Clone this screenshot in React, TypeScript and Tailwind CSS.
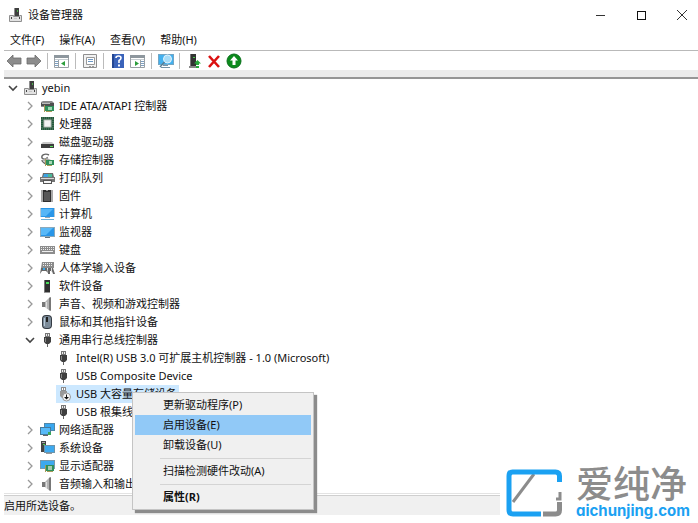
import type { ReactNode } from 'react';

// ---------------------------------------------------------------------------
// Device icons (16x16)
// ---------------------------------------------------------------------------

function Svg({ children }: { children: ReactNode }) {
  return (
    <svg viewBox="0 0 16 16" className="h-4 w-4 shrink-0" aria-hidden="true">
      {children}
    </svg>
  );
}

const ICONS: Record<string, ReactNode> = {
  computer: (
    <Svg>
      <path d="M6 1h5v9H6z" fill="#3f3f3f" />
      <path d="M6 1h1v8H6z" fill="#8e8e8e" />
      <path d="M9 3h1v2H9z" fill="#4bb04b" />
      <path d="M1.500 8.500h4v1h6v-1h2v6h-12z" fill="#e2e2e2" stroke="#8f8f8f" />
      <path d="M3 10h1v2H3zM11 10h1v2h-1z" fill="#444" />
      <path d="M6 11h3v1H6z" fill="#c4c4c4" />
    </Svg>
  ),
  ide: (
    <Svg>
      <path d="M1 4l2-1h9l2 2v4H1z" fill="#8a8a8a" />
      <path d="M1 5h13v3H1z" fill="#4f4f4f" />
      <path d="M2 5h8v1H2z" fill="#bbb" />
      <path d="M5 8h9v5H5z" fill="#2f8f5b" />
      <path d="M8 9h4v3H8z" fill="#9fd8b4" />
      <path d="M4 7h1v7H4zM6 13h6v1H6z" fill="#a89a58" />
    </Svg>
  ),
  cpu: (
    <Svg>
      <path d="M1 1h13v13H1z" fill="#24583c" />
      <path d="M2 2h11v11H2z" fill="none" stroke="#7f9f86" strokeDasharray="1 1" strokeWidth=".7" />
      <path d="M3.500 3.500h8v8h-8z" fill="#b9c0b9" />
      <path d="M4.500 4.500h6v6h-6z" fill="#f2f2f2" />
    </Svg>
  ),
  disk: (
    <Svg>
      <path d="M3 8h9l2 2H1z" fill="#c9c9c9" />
      <path d="M1 10h13v4H1z" fill="#3d3d3d" />
      <path d="M10 12h3v1h-3z" fill="#5be35b" />
    </Svg>
  ),
  storage: (
    <Svg>
      <path d="M9 3C5 1 1 3 2 6c2 2 6 1 5-1M2 8c0 2 2 3 4 4" fill="none" stroke="#666" strokeWidth="1.4" />
      <path d="M2 8l5-2 4 2-4 3z" fill="#aaa" />
      <path d="M6 8h8v5H6z" fill="#2f8f5b" />
      <path d="M9 9h3v3H9z" fill="#a8d6b6" />
      <path d="M5 7h1v7H5zM7 13h5v1H7z" fill="#a89a58" />
    </Svg>
  ),
  printer: (
    <Svg>
      <path d="M3 3h10l1 4H2z" fill="#6b6b6b" />
      <path d="M4 4h5v3H3z" fill="#3da1e0" />
      <path d="M8 4h4v3H8z" fill="#49b897" />
      <path d="M0 7h15v5H0z" fill="#747474" />
      <path d="M1 8h13v1H1z" fill="#d8d8d8" />
      <path d="M3 10h9v4H3z" fill="#555" />
      <path d="M4 11h7v2H4z" fill="#f4f4f4" />
    </Svg>
  ),
  firmware: (
    <Svg>
      <path d="M1 3h2M1 5h2M1 7h2M1 9h2M1 11h2M1 13h2M11 3h2M11 5h2M11 7h2M11 9h2M11 11h2M11 13h2" stroke="#555" />
      <path d="M3 2h3l1 1 1-1h3v12H3z" fill="#303030" />
      <path d="M4 4h6v9H4z" fill="#585858" />
    </Svg>
  ),
  pc: (
    <Svg>
      <path d="M0 2h15v9H0z" fill="#b6c8d4" />
      <path d="M1 2h13v9H1z" fill="#2996e8" />
      <path d="M1 3h12L6 10H1z" fill="#55b6f7" />
      <path d="M5 11h5v1H5z" fill="#9aa7af" />
      <path d="M1 13h13v1H1z" fill="#6caed6" />
    </Svg>
  ),
  monitor: (
    <Svg>
      <path d="M0 3h15v10H0z" fill="#8ba9bb" />
      <path d="M1 4h13v8H1z" fill="#2996e8" />
      <path d="M1 4h12l-7 7H1z" fill="#59b9f8" />
      <path d="M5 13h5v1H5z" fill="#68747c" />
    </Svg>
  ),
  keyboard: (
    <Svg>
      <path d="M0 4h15v8H0z" fill="#8d8d8d" />
      <path d="M1 5.500h13M1 7.500h13" stroke="#eee" strokeDasharray="1 1" />
      <path d="M2 9.500h11" stroke="#eee" />
    </Svg>
  ),
  hid: (
    <Svg>
      <path d="M2 2h12v6H1z" fill="#8b8b8b" />
      <path d="M3 3.500h10M3 5.500h10" stroke="#eee" strokeDasharray="1 1" />
      <path d="M0 14l1-6h6l1 5-2-2H2zM8 8h5l2 6h-2l-1-3h-2v3H8z" fill="#666" />
      <path d="M3 8h2v2H3z" fill="#37a6e8" />
      <path d="M11 8h1v4h-1z" fill="#ddd" />
    </Svg>
  ),
  software: (
    <Svg>
      <path d="M4 2h6v12H4z" fill="#303030" />
      <path d="M4 2h1v12H4z" fill="#777" />
      <path d="M6 4h3v2H6z" fill="#48dc58" />
      <path d="M4 14h6v1H4z" fill="#999" />
    </Svg>
  ),
  sound: (
    <Svg>
      <path d="M2 6h3v5H2z" fill="#777" />
      <path d="M5 6l5-5v14l-5-4z" fill="#b4b4b4" />
      <path d="M6 6h1v6H6z" fill="#e0e0e0" />
      <path d="M9 2l2-1v14l-2-1z" fill="#777" />
    </Svg>
  ),
  mouse: (
    <Svg>
      <rect x="2" y="1" width="10" height="14" rx="4" fill="#343b43" />
      <rect x="3" y="2" width="8" height="12" rx="3" fill="#7c8b99" />
      <path d="M6 3h2v5H6z" fill="#202020" />
      <path d="M4 4h1v8H4z" fill="#b4c6d5" />
    </Svg>
  ),
  usb: (
    <Svg>
      <path d="M5 1h5v4H5z" fill="#777" />
      <path d="M6 2h1v2H6zM8 2h1v2H8z" fill="#eee" />
      <path d="M4 5h7v5l-2 2H6l-2-2z" fill="#3f3f3f" />
      <path d="M5 6h1v4H5z" fill="#888" />
      <path d="M7 12h1v3H7z" fill="#666" />
    </Svg>
  ),
  usbDisabled: (
    <Svg>
      <path d="M5 1h5v4H5z" fill="#8d8d8d" />
      <path d="M6 2h1v2H6zM8 2h1v2H8z" fill="#fff" />
      <path d="M4 5h7v5l-2 2H6l-2-2z" fill="#999" />
      <circle cx="10.500" cy="11" r="4" fill="#f5f5f5" stroke="#999" />
      <path d="M10.500 8.500v3" stroke="#111" />
      <path d="M8 11h5l-2.500 2.500z" fill="#111" />
    </Svg>
  ),
  network: (
    <Svg>
      <path d="M4 1h11v8H4z" fill="#4f88aa" />
      <path d="M5 2h9v6H5z" fill="#39a7ef" />
      <path d="M0 5h11v8H0z" fill="#477a9b" />
      <path d="M1 6h9v6H1z" fill="#58baf8" />
      <path d="M3 13h5v1H3z" fill="#666" />
      <path d="M8 10h3v3H8z" fill="#3aa65a" />
    </Svg>
  ),
  system: (
    <Svg>
      <path d="M1 1h5v11H1z" fill="#444" />
      <path d="M2 2h3v1H2z" fill="#aaa" />
      <path d="M3 4h2v1H3z" fill="#4bd04b" />
      <path d="M4 5h11v8H4z" fill="#6d94aa" />
      <path d="M5 6h9v6H5z" fill="#3da9ef" />
      <path d="M6 13h6v1H6z" fill="#999" />
    </Svg>
  ),
  display: (
    <Svg>
      <path d="M0 2h15v9H0z" fill="#7799ad" />
      <path d="M1 3h13v7H1z" fill="#3da9ef" />
      <path d="M6 7h8v6H6z" fill="#2f8f5b" />
      <path d="M8 8h4v4H8z" fill="#a5cab0" />
      <path d="M5 7h1v7H5zM7 13h6v1H7z" fill="#a89a58" />
    </Svg>
  ),
};

// ---------------------------------------------------------------------------
// Toolbar
// ---------------------------------------------------------------------------

function Arrow({ flip = false }: { flip?: boolean }) {
  return (
    <Svg>
      <path
        d={flip ? 'M15 8L9 2v3H1v6h8v3z' : 'M1 8l6-6v3h8v6H7v3z'}
        fill="#8c8c8c"
        stroke="#6b6b6b"
        strokeWidth=".8"
      />
    </Svg>
  );
}

function Panel({ right = false }: { right?: boolean }) {
  return (
    <Svg>
      <path d="M.5 2.500h14v12H.5z" fill="#fff" stroke="#9aa0a5" />
      <path d="M0 2h15v3H0z" fill="#8e979e" />
      <path d="M1 6h13v1H1z" fill="#c6cdd2" />
      <path d={right ? 'M10.500 7v7' : 'M4.500 7v7'} stroke="#9aa0a5" />
      <path d={right ? 'M11 8.500h3M11 10.500h3M11 12.500h3' : 'M1 8.500h3M1 10.500h3M1 12.500h3'} stroke="#7d9fc0" />
      <path d={right ? 'M5 8l4 2.500L5 13z' : 'M11 8l-4 2.500 4 2.500z'} fill="#2d9e3c" />
    </Svg>
  );
}

const TOOLS: { label: string; icon: ReactNode; divider?: boolean }[] = [
  { label: '后退', icon: <Arrow /> },
  { label: '前进', icon: <Arrow flip />, divider: true },
  { label: '显示/隐藏控制台树', icon: <Panel />, divider: true },
  {
    label: '属性',
    icon: (
      <Svg>
        <path d="M1.500 1.500h13v13h-13z" fill="#f2f2f2" stroke="#8f8f8f" />
        <path d="M4.500 4.500h8v7h-8z" fill="#fff" stroke="#999" />
        <path d="M6 6.500h5M6 8.500h5" stroke="#6d98c5" />
        <path d="M7 13h2v1H7zM10 13h2v1h-2z" fill="#999" />
      </Svg>
    ),
    divider: true,
  },
  {
    label: '帮助',
    icon: (
      <Svg>
        <path d="M2 1h12v14H2z" fill="#3a63ba" />
        <path d="M2 1h2v14H2z" fill="#244692" />
        <path d="M6 5q0-2 2.500-2T11 5q0 1.500-2 2.500V10" fill="none" stroke="#fff" strokeWidth="1.600" />
        <path d="M8 11.500h2v2H8z" fill="#fff" />
      </Svg>
    ),
  },
  { label: '显示/隐藏操作窗格', icon: <Panel right />, divider: true },
  {
    label: '扫描检测硬件改动',
    icon: (
      <Svg>
        <path d="M0 1h16v11H0z" fill="#74a6c4" />
        <path d="M1 2h14v9H1z" fill="#43b0ee" />
        <path d="M5 12h5v1H5zM3 14h9v1H3z" fill="#7593a7" />
        <circle cx="9.500" cy="6" r="4" fill="#a6dcf8" stroke="#e3f4fd" />
        <path d="M6.500 9L2 14" stroke="#5a7d93" strokeWidth="1.500" />
      </Svg>
    ),
    divider: true,
  },
  {
    label: '启用设备',
    icon: (
      <Svg>
        <path d="M4 1h6v12H4z" fill="#333" />
        <path d="M4 1h1v12H4z" fill="#777" />
        <path d="M7 4h2v1H7z" fill="#4bd04b" />
        <path d="M3 13h7v2H3z" fill="#888" />
        <path d="M11.500 7L15 10.500h-2V12h-3v-1.500H8z" fill="#27a83a" />
        <path d="M10 13h3v2h-3z" fill="#27a83a" />
      </Svg>
    ),
  },
  {
    label: '卸载设备',
    icon: (
      <Svg>
        <path d="M3 3l10 11M13 3L3 14" stroke="#db1111" strokeWidth="2.600" />
      </Svg>
    ),
  },
  {
    label: '更新驱动程序',
    icon: (
      <Svg>
        <circle cx="8" cy="8" r="7" fill="#0b8a1c" stroke="#08701a" />
        <path d="M8 3l4 4.500H9.500V12h-3V7.500H4z" fill="#fff" />
      </Svg>
    ),
  },
];

// ---------------------------------------------------------------------------
// Tree data
// ---------------------------------------------------------------------------

interface Device {
  icon: string;
  name: string;
  children?: Device[];
}

const DEVICES: Device[] = [
  { icon: 'ide', name: 'IDE ATA/ATAPI 控制器' },
  { icon: 'cpu', name: '处理器' },
  { icon: 'disk', name: '磁盘驱动器' },
  { icon: 'storage', name: '存储控制器' },
  { icon: 'printer', name: '打印队列' },
  { icon: 'firmware', name: '固件' },
  { icon: 'pc', name: '计算机' },
  { icon: 'monitor', name: '监视器' },
  { icon: 'keyboard', name: '键盘' },
  { icon: 'hid', name: '人体学输入设备' },
  { icon: 'software', name: '软件设备' },
  { icon: 'sound', name: '声音、视频和游戏控制器' },
  { icon: 'mouse', name: '鼠标和其他指针设备' },
  {
    icon: 'usb',
    name: '通用串行总线控制器',
    children: [
      { icon: 'usb', name: 'Intel(R) USB 3.0 可扩展主机控制器 - 1.0 (Microsoft)' },
      { icon: 'usb', name: 'USB Composite Device' },
      { icon: 'usbDisabled', name: 'USB 大容量存储设备' },
      { icon: 'usb', name: 'USB 根集线器' },
    ],
  },
  { icon: 'network', name: '网络适配器' },
  { icon: 'system', name: '系统设备' },
  { icon: 'display', name: '显示适配器' },
  { icon: 'sound', name: '音频输入和输出' },
];

const MENU = [['更新驱动程序(P)', '启用设备(E)', '卸载设备(U)'], ['扫描检测硬件改动(A)'], ['属性(R)']];

function Chevron({ open = false }: { open?: boolean }) {
  return (
    <button type="button" aria-label={open ? '折叠' : '展开'} className="h-4 w-4 shrink-0">
      <svg viewBox="0 0 16 16" className="h-4 w-4" aria-hidden="true">
        <path
          d={open ? 'M5 6l4 4 4-4' : 'M7 4l4 4-4 4'}
          fill="none"
          stroke={open ? '#444' : '#999'}
          strokeWidth={open ? 1.6 : 1.3}
        />
      </svg>
    </button>
  );
}

function ContextMenu() {
  return (
    <div
      role="menu"
      className="absolute top-[7px] left-[76px] z-10 w-[182px] border border-[#c4c4c4] bg-[#f0f0f0] p-0.5 shadow-[3px_3px_1px_#8c8c8c]"
    >
      {MENU.map((group, g) => (
        <div key={group[0]}>
          {g > 0 && <div className="mt-[3px] mb-0.5 ml-[25px] h-px bg-[#d4d4d4]" />}
          {group.map((item) => (
            <button
              key={item}
              type="button"
              role="menuitem"
              className={`block h-5 w-full pl-7 text-left ${
                item === '启用设备(E)' ? 'bg-[#91c9f7]' : ''
              } ${g === 2 ? 'font-bold' : ''}`}
            >
              {item}
            </button>
          ))}
        </div>
      ))}
    </div>
  );
}

function Watermark() {
  return (
    <div className="absolute right-0 bottom-0 flex h-14 items-start gap-3.5 bg-white pr-2 pl-1.5">
      <svg viewBox="0 0 56 48" className="mt-0.5 h-12 w-14" aria-hidden="true">
        <path d="M7 33L28 5" stroke="#8c8c8c" strokeWidth="3" />
        <path d="M53.500 13V7q0-4-4-4h-43Q3 3 3 7v34q0 4 4 4h28" fill="none" stroke="#1ba1f2" strokeWidth="5" />
        <path d="M54 23v7h-4" fill="none" stroke="#8c8c8c" strokeWidth="3" />
        <path d="M53.500 33v8q0 4-4 4H37" fill="none" stroke="#8c8c8c" strokeWidth="5" />
      </svg>
      <div className="flex flex-col">
        <span className="text-[37px] leading-[33px] font-medium text-[#8c8c8c]">爱纯净</span>
        <span className="font-[Inter,sans-serif] text-[15px] leading-[22px] font-bold text-[#1ba1f2] [font-feature-settings:'cv11']">
          aichunjing.com
        </span>
      </div>
    </div>
  );
}

export default function App() {
  return (
    <div className="relative flex min-h-screen flex-col bg-white pb-2 pl-1 font-['Noto_Sans','Noto_Sans_CJK_SC',sans-serif] text-[11px] leading-[18px] text-[#111]">
      <header className="flex h-[30px] items-center gap-1 pl-1">
        {ICONS.computer}
        <h1 className="flex-1">设备管理器</h1>
        <div className="flex gap-[9px]">
          <button type="button" aria-label="最小化" className="flex h-[30px] w-8 items-center justify-center">
            <span className="h-px w-[9px] bg-[#333]" />
          </button>
          <button type="button" aria-label="最大化" className="flex h-[30px] w-8 items-center justify-center">
            <span className="h-[9px] w-[9px] border border-[#111]" />
          </button>
          <button type="button" aria-label="关闭" className="flex h-[30px] w-8 items-center justify-center">
            <svg viewBox="0 0 10 10" className="h-2.5 w-2.5" aria-hidden="true">
              <path d="M0 0l10 10M10 0L0 10" stroke="#333" />
            </svg>
          </button>
        </div>
      </header>

      <nav className="flex h-5 items-center gap-[15px] pl-1.5">
        {['文件(F)', '操作(A)', '查看(V)', '帮助(H)'].map((item) => (
          <button key={item} type="button">
            {item}
          </button>
        ))}
      </nav>

      <div className="flex h-5 items-center border-t border-[#b9b9b9]">
        {TOOLS.map((tool) => (
          <div key={tool.label} className="flex items-center">
            <button type="button" aria-label={tool.label} className="flex h-5 w-5 items-center justify-center">
              {tool.icon}
            </button>
            {tool.divider && <span className="mr-1 ml-[3px] h-4 w-px bg-[#bbb]" />}
          </div>
        ))}
      </div>
      <div className="h-[9px] border-b-2 border-[#969696] bg-[#ececec]" />

      <main className="flex-1">
        <div className="flex h-[18px] items-center">
          <Chevron open />
          <span className="ml-[3px]">{ICONS.computer}</span>
          <span className="ml-[3px]">yebin</span>
        </div>
        <ul>
          {DEVICES.map((device) => (
            <li key={device.name}>
              <div className="flex h-[18px] items-center pl-[17px]">
                <Chevron open={!!device.children} />
                <span className="ml-[3px]">{ICONS[device.icon]}</span>
                <span className="ml-[3px]">{device.name}</span>
              </div>
              {device.children && (
                <ul className="pl-[52px]">
                  {device.children.map((child) => (
                    <li key={child.name} className="relative flex h-[18px]">
                      <div
                        className={`flex h-[18px] items-center gap-1 pr-0.5 ${
                          child.icon === 'usbDisabled' ? 'bg-[#cce8ff]' : ''
                        }`}
                      >
                        {ICONS[child.icon]}
                        <span>{child.name}</span>
                      </div>
                      {child.icon === 'usbDisabled' && <ContextMenu />}
                    </li>
                  ))}
                </ul>
              )}
            </li>
          ))}
        </ul>
      </main>

      <footer className="border-t border-[#e3e3e3]">
        <div className="mt-px h-5 border-t border-[#cfcfcf] bg-[#f0f0f0] leading-5">启用所选设备。</div>
      </footer>

      <Watermark />
    </div>
  );
}
